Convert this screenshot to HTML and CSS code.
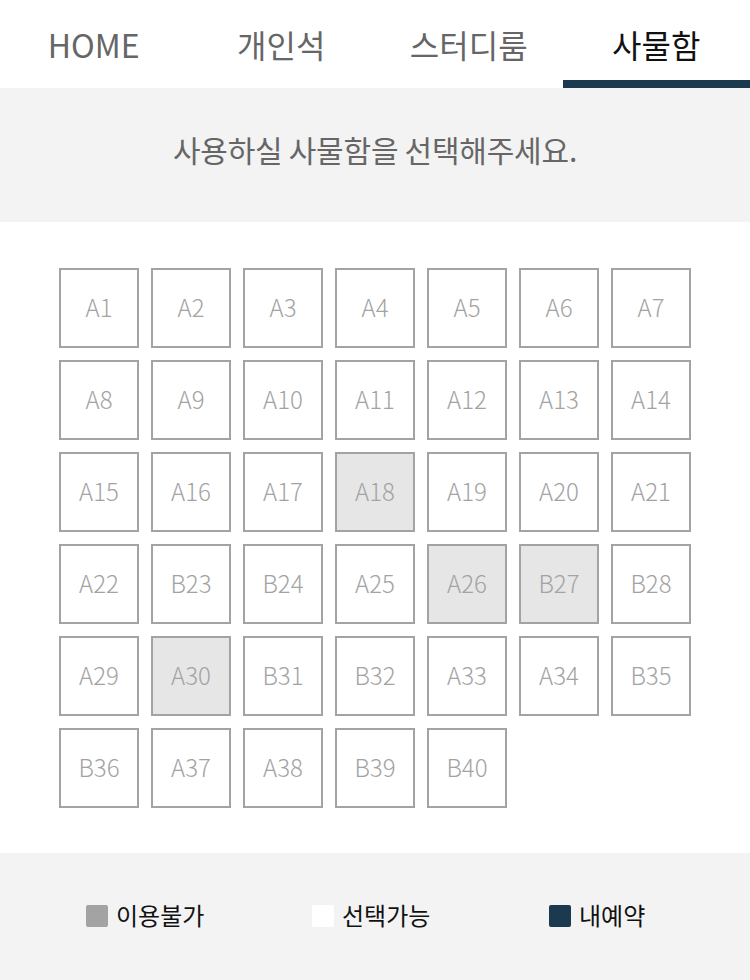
FILE: index.html
```html
<!DOCTYPE html>
<html lang="ko">
<head>
    <meta charset="UTF-8">
    <meta name="viewport" content="width=device-width, initial-scale=1.0">
    <title>사물함 선택</title>
    <link rel="stylesheet" href="styles.css">
</head>
<body>
    <nav class="tabs">
        <a class="tab">HOME</a>
        <a class="tab">개인석</a>
        <a class="tab">스터디룸</a>
        <a class="tab active">사물함</a>
    </nav>

    <div class="notice">사용하실 사물함을 선택해주세요.</div>

    <div class="locker-wrap">
        <div class="locker-grid" id="lockers">
            <!-- 사물함 목록 -->
        </div>
    </div>

    <footer class="legend">
        <div class="legend-item"><span class="dot dot-off"></span>이용불가</div>
        <div class="legend-item"><span class="dot dot-free"></span>선택가능</div>
        <div class="legend-item"><span class="dot dot-mine"></span>내예약</div>
    </footer>

    <script>
        // 사물함 이름 (A/B 구역)
        const names = ['A1','A2','A3','A4','A5','A6','A7',
            'A8','A9','A10','A11','A12','A13','A14',
            'A15','A16','A17','A18','A19','A20','A21',
            'A22','B23','B24','A25','A26','B27','B28',
            'A29','A30','B31','B32','A33','A34','B35',
            'B36','A37','A38','B39','B40'];
        const disabled = ['A18', 'A26', 'B27', 'A30'];

        const grid = document.getElementById('lockers');
        names.forEach(name => {
            const cell = document.createElement('div');
            cell.className = 'locker' + (disabled.includes(name) ? ' off' : '');
            cell.textContent = name;
            grid.appendChild(cell);
        });
    </script>
</body>
</html>
```

FILE: styles.css
```css
* {
    box-sizing: border-box;
    margin: 0;
    padding: 0;
}

body {
    font-family: "Noto Sans CJK KR", "Noto Sans", sans-serif;
    background: #fff;
    width: 750px;
}

.tabs {
    display: flex;
    height: 88px;
}

.tab {
    flex: 1;
    display: flex;
    align-items: center;
    justify-content: center;
    font-size: 32px;
    color: #666;
    border-bottom: 8px solid transparent;
    padding-top: 8px;
}

.tab.active {
    color: #111;
    border-bottom-color: #1b3a4f;
}

.notice {
    background: #f3f3f3;
    height: 134px;
    display: flex;
    align-items: center;
    justify-content: center;
    font-size: 30px;
    color: #666;
    letter-spacing: -0.2px;
    word-spacing: -2px;
    padding-bottom: 12px;
}

.locker-wrap {
    padding: 46px 0 45px;
}

.locker-grid {
    display: grid;
    grid-template-columns: repeat(7, 80px);
    gap: 12px;
    justify-content: center;
}

.locker {
    height: 80px;
    border: 2px solid #a3a3a3;
    display: flex;
    align-items: center;
    justify-content: center;
    font-size: 24px;
    font-weight: 300;
    color: #a3a3a3;
    background: #fff;
    padding-bottom: 3px;
}

.locker.off {
    background: #e6e6e6;
}

.legend {
    background: #f3f3f3;
    height: 127px;
    display: grid;
    grid-template-columns: 226px 237px 1fr;
    align-items: center;
    padding-left: 86px;
}

.legend-item {
    display: flex;
    align-items: center;
    font-size: 24px;
    color: #111;
    padding-bottom: 5px;
}

.dot {
    width: 22px;
    height: 22px;
    border-radius: 2px;
    margin-right: 8px;
    margin-top: 4px;
}

.dot-off { background: #a3a3a3; }
.dot-free { background: #fff; }
.dot-mine { background: #1b3a4f; }
```
